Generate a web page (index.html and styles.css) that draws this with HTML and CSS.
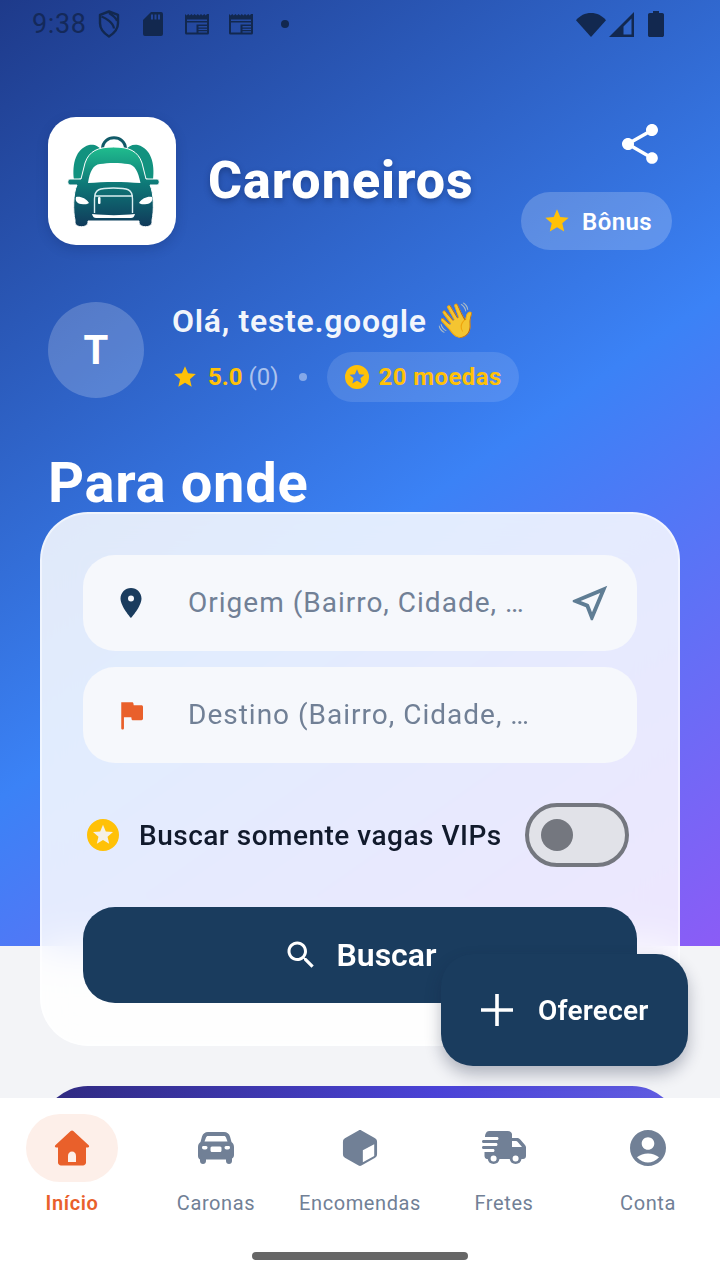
FILE: index.html
```html
<!DOCTYPE html>
<html lang="pt-BR">
<head>
<meta charset="utf-8">
<title>Caroneiros</title>
<link rel="stylesheet" href="styles.css">
</head>
<body>
<svg class="defs" width="0" height="0" aria-hidden="true">
  <defs>
    <linearGradient id="logoGrad" x1="0" y1="0" x2="0" y2="1">
      <stop offset="0" stop-color="#20bd8e"/>
      <stop offset="0.45" stop-color="#0e7a78"/>
      <stop offset="1" stop-color="#10395a"/>
    </linearGradient>
    <path id="star" d="M12 17.27L18.18 21l-1.64-7.03L22 9.24l-7.19-.61L12 2 9.19 8.63 2 9.24l5.46 4.73L5.82 21z"/>
    <path id="coin" fill-rule="evenodd" d="M12 2a10 10 0 1 0 0 20 10 10 0 0 0 0-20zm0 3.6l1.75 4.15 4.5.38-3.42 2.96 1.03 4.4L12 15.15 8.14 17.5l1.03-4.4-3.42-2.96 4.5-.38z"/>
    <path id="news" fill-rule="evenodd" d="M1 1l1.6 1.4L4.2 1l1.6 1.4L7.4 1 9 2.4 10.6 1l1.6 1.4L13.8 1l1.6 1.4L17 1l1.6 1.4L20.2 1l1.6 1.4L23 1l2 0v19a1.6 1.6 0 0 1-1.6 1.6H2.6A1.6 1.6 0 0 1 1 20zM3 6.5v13h9.5v-8H23V6.5zM3 8h20v1.6H3zm11.5 5V14.600H23V13zm0 2.700v1.400H23v-1.400zm0 2.600v1.300H23v-1.300z"/>
  </defs>
</svg>

<main class="screen">
  <div class="scroll">
    <section class="hero">
      <div class="status">
        <span class="time">9:38</span>
        <svg class="st st-shield" viewBox="0 0 22 28"><path fill="none" stroke="currentColor" stroke-width="2.400" stroke-linejoin="round" d="M11 1.500l9 3.300v8.500c0 5.700-3.800 10-9 13.200-5.200-3.200-9-7.500-9-13.200V4.800z"/><path fill="none" stroke="currentColor" stroke-width="2.200" d="M3.500 6.500c4 1.500 12 6 12.500 12M11 3c5 3 7 4.500 8 8"/></svg>
        <svg class="st st-sd" viewBox="0 0 20 24"><path fill="currentColor" fill-rule="evenodd" d="M8 0h10a2 2 0 0 1 2 2v20a2 2 0 0 1-2 2H2a2 2 0 0 1-2-2V8zM8 2.500v5h2v-5zm3.500 0v5h2v-5zm3.500 0v5h2v-5z"/></svg>
        <svg class="st st-news" viewBox="0 0 26 22"><use href="#news" fill="currentColor"/></svg>
        <svg class="st st-news2" viewBox="0 0 26 22"><use href="#news" fill="currentColor"/></svg>
        <span class="st-dot"></span>
        <div class="status-right">
          <svg class="st st-wifi" viewBox="0 0 30 25"><path fill="currentColor" d="M15 25L0 8.300C3.900 3.500 9.100 1 15 1s11.100 2.500 15 7.300z"/></svg>
          <svg class="st st-signal" viewBox="0 0 25 25"><path fill="currentColor" fill-rule="evenodd" d="M25 0v25H0zM22.500 6.500l-8 8V22.500h8z"/></svg>
          <svg class="st st-batt" viewBox="0 0 16 26"><path fill="currentColor" d="M5 0h6v2h3.200c1 0 1.800.8 1.800 1.800v20.400c0 1-.8 1.800-1.800 1.800H1.800C.8 26 0 25.200 0 24.200V3.800C0 2.800.8 2 1.800 2H5z"/></svg>
        </div>
      </div>

      <header class="brand">
        <div class="logo">
          <svg viewBox="0 0 128 128" width="128" height="128">
            <path d="M54.500 32c0-15 23-15 23 0" fill="none" stroke="#115a68" stroke-width="3"/>
            <path d="M26 63C24 46 28 32 41 28c5-1 10 1 12 5-9 3-15 11-18 28z" fill="#12927f"/>
            <path d="M105 63c2-17-2-31-15-35-5-1-10 1-12 5 9 3 15 11 18 28z" fill="#12927f"/>
            <path d="M65.500 30C50 30 41 34 37 46L33 62H22c-3 0-3 6 0 6h7C25 76 25 95 27 103v3c1 5 12 5 13 0v-2h51v2c1 5 12 5 13 0v-3c2-8 2-27-2-35h7c3 0 3-6 0-6H98L94 46C90 34 81 30 65.500 30z" fill="url(#logoGrad)" stroke="#fff" stroke-width="1"/>
            <path d="M40 66c2-12 5-18 12-19 8-1.500 20-1.500 28 0 7 1 10 7 12.500 19-16.500-1.500-36.500-1.500-52.500 0z" fill="#fff"/>
            <path d="M28 80c4-1 10 1 13 6-2 1.500-4 1.500-8 1-4-.5-6-3-5-7zM104 80c-4-1-10 1-13 6 2 1.500 4 1.500 8 1 4-.5 6-3 5-7z" fill="#fff"/>
            <path d="M46.500 96V82c0-10 5-11 19-11s19 1 19 11v14M46.500 79h38.500" fill="none" stroke="#d9eef0" stroke-width="1.400"/>
            <rect x="50" y="80" width="2.500" height="7" rx="1" fill="#fff"/>
            <path d="M44 97c14 1.500 30 1.500 43 0-1 3-2 4-4 4H48c-2 0-3-1-4-4z" fill="#fff"/>
          </svg>
        </div>
        <h1 class="brand-name">Caroneiros</h1>
        <div class="brand-actions">
          <svg class="share" viewBox="0 0 24 24"><path fill="#fff" d="M18 16.080c-.76 0-1.440.3-1.960.77L8.910 12.700c.05-.23.09-.46.09-.7s-.04-.47-.09-.7l7.050-4.110c.54.5 1.250.81 2.040.81 1.660 0 3-1.340 3-3s-1.340-3-3-3-3 1.340-3 3c0 .24.04.47.09.7L8.040 9.810C7.500 9.310 6.790 9 6 9c-1.660 0-3 1.340-3 3s1.340 3 3 3c.79 0 1.500-.31 2.040-.81l7.120 4.160c-.05.21-.08.43-.08.65 0 1.610 1.310 2.920 2.920 2.920 1.610 0 2.920-1.310 2.920-2.920s-1.310-2.920-2.920-2.920z"/></svg>
          <div class="bonus">
            <svg class="bonus-star" viewBox="0 0 24 24"><use href="#star" fill="#ffc107"/></svg>
            <span class="bonus-label">Bônus</span>
          </div>
        </div>
      </header>

      <div class="user">
        <div class="avatar">T</div>
        <div class="user-info">
          <div class="greeting">Olá, teste.google <span class="wave">👋</span></div>
          <div class="meta">
            <svg class="meta-star" viewBox="0 0 24 24"><use href="#star" fill="#ffc107"/></svg>
            <span class="score">5.0</span>
            <span class="count">(0)</span>
            <span class="meta-dot"></span>
            <div class="coins">
              <svg class="coin-icon" viewBox="2 2 20 20"><use href="#coin" fill="#ffc107"/></svg>
              <span>20 moedas</span>
            </div>
          </div>
        </div>
      </div>

      <h2 class="headline">Para onde</h2>

      <form class="card">
        <div class="field">
          <svg class="field-icon" viewBox="0 0 24 24"><path fill="#1a3c5e" d="M12 2C8.130 2 5 5.130 5 9c0 5.250 7 13 7 13s7-7.750 7-13c0-3.870-3.130-7-7-7zm0 9a2 2 0 1 1 0-4 2 2 0 0 1 0 4z"/></svg>
          <span class="placeholder">Origem (Bairro, Cidade, …</span>
          <svg class="near" viewBox="0 0 24 24"><path fill="#5f7d94" d="M17.270 6.730l-4.240 10.130-1.320-3.420-.32-.83-.82-.32-3.430-1.330 10.130-4.230M21 3L3 10.530v.98l6.840 2.650L12.480 21h.98L21 3z"/></svg>
        </div>
        <div class="field">
          <svg class="field-icon" viewBox="0 0 24 24"><path fill="#e9602b" d="M5.500 3.500h7.200c.5 0 .8.300.9.700l.2 1.300h5.200c.5 0 1 .4 1 1v8c0 .5-.5 1-1 1h-5.700c-.5 0-.8-.3-.9-.7l-.2-1.300H7.300v7.300c0 .5-.4.900-.9.900s-.9-.4-.9-.9z"/></svg>
          <span class="placeholder">Destino (Bairro, Cidade, …</span>
        </div>
        <div class="vip">
          <svg class="vip-icon" viewBox="2 2 20 20"><circle cx="12" cy="12" r="7" fill="#f5f0e6"/><use href="#coin" fill="#ffc107"/></svg>
          <span class="vip-label">Buscar somente vagas VIPs</span>
          <span class="switch"><span class="knob"></span></span>
        </div>
        <button type="button" class="search-btn">
          <svg class="search-icon" viewBox="0 0 24 24"><path fill="#fff" d="M15.500 14h-.79l-.28-.27C15.410 12.590 16 11.110 16 9.500 16 5.910 13.090 3 9.500 3S3 5.910 3 9.500 5.910 16 9.500 16c1.610 0 3.090-.59 4.230-1.570l.27.28v.79l5 4.990L20.490 19l-4.990-5zm-6 0C7.010 14 5 11.990 5 9.500S7.010 5 9.500 5 14 7.010 14 9.500 11.990 14 9.500 14z"/></svg>
          <span>Buscar</span>
        </button>
      </form>
    </section>
    <div class="promo"></div>
  </div>

  <button type="button" class="fab">
    <svg class="fab-icon" viewBox="0 0 24 24"><path fill="#fff" d="M20 12.900h-7.100V20h-1.800v-7.100H4v-1.800h7.100V4h1.800v7.100H20z"/></svg>
    <span>Oferecer</span>
  </button>

  <nav class="nav">
    <div class="tabs">
      <a class="tab tab-active">
        <span class="tab-pill">
          <svg class="tab-icon" viewBox="0 0 36 36"><path fill="currentColor" d="M16.700 1c.8-.7 1.900-.7 2.600 0l15.400 14.300c.9.800.3 2.200-.9 2.200H32v15c0 1.600-1.400 3-3 3H7c-1.600 0-3-1.400-3-3v-15H2.200c-1.200 0-1.800-1.400-.9-2.200z"/><path fill="#fdefe9" d="M14 32v-6c0-2.800 1.800-4.500 4-4.500s4 1.700 4 4.500v6z"/></svg>
        </span>
        <span class="tab-label">Início</span>
      </a>
      <a class="tab">
        <span class="tab-pill">
          <svg class="tab-icon" viewBox="0 0 36 32"><path fill="currentColor" fill-rule="evenodd" d="M10 0h16c3 0 5 1.500 6 4.500l1.500 5.500c1.500 1 2.500 2.800 2.500 5v8c0 2-1 3-2 3.500V29c0 1.700-1.300 3-3 3s-3-1.300-3-3v-1.500H8V29c0 1.700-1.300 3-3 3s-3-1.300-3-3v-1.500C1 27 0 26 0 24v-9c0-2.200 1-4 2.500-5L4 4.500C5 1.500 7 0 10 0zm0 4c-1 0-1.700.6-2 1.500L6.500 9.500h23L28 5.500C27.700 4.600 27 4 26 4zM4 15.500c0 1 .8 2 2 2h1.500c1.200 0 2-1 2-2s-.8-1.500-2-1.500H5.500c-1 0-1.500.5-1.500 1.500zm22.500 0c0 1 .8 2 2 2H30c1.200 0 2-1 2-2s-.5-1.500-1.500-1.500h-2c-1.200 0-2 .5-2 1.500zM14 14.500c-1 0-1.500.7-1.500 1.800v1.900c0 1 .5 1.800 1.500 1.800h8c1 0 1.500-.8 1.500-1.800v-1.900c0-1.100-.5-1.800-1.500-1.800z"/></svg>
        </span>
        <span class="tab-label">Caronas</span>
      </a>
      <a class="tab">
        <span class="tab-pill">
          <svg class="tab-icon" viewBox="0 0 36 38"><path fill="currentColor" fill-rule="evenodd" d="M16.500.5c1-.6 2-.6 3 0l14 8c1.600 1 2.500 2 2.500 4v13c0 2-.9 3-2.500 4l-14 8c-1 .6-2 .6-3 0l-14-8C.9 28.500 0 27.500 0 25.500v-13c0-2 .9-3 2.500-4zM33 15l-12 6.500V34l12-6.500z"/></svg>
        </span>
        <span class="tab-label">Encomendas</span>
      </a>
      <a class="tab">
        <span class="tab-pill">
          <svg class="tab-icon tab-truck" viewBox="0 0 44 34"><path fill="currentColor" fill-rule="evenodd" d="M7 0h19c2 0 4 1.500 4 3.500V7h5c1.500 0 2.500.5 3.500 1.700L43 14c.7.800 1 1.600 1 2.600V25c0 2-1.300 3-3 3h-1.500a6 6 0 0 1-11.800 0H17.500a6 6 0 0 1-11.800 0H5c-1.500 0-2.500-1.500-2.500-3v-4H11c1 0 1.500-.7 1.500-1.500S12 18 11 18H1.500C.5 18 0 17.300 0 16.500S.5 15 1.500 15H14c1 0 1.500-.7 1.500-1.500S15 12 14 12H1.500C.5 12 0 11.300 0 10.500S.5 9 1.500 9H15c1 0 1.500-.7 1.500-1.500S16 6 15 6H3C3 3 4.500 0 7 0zm23 10v6h10l-4.500-5.300c-.4-.5-.8-.7-1.500-.7zM11.600 24.500a3 3 0 1 0 0 6 3 3 0 0 0 0-6zm22 0a3 3 0 1 0 0 6 3 3 0 0 0 0-6z"/></svg>
        </span>
        <span class="tab-label">Fretes</span>
      </a>
      <a class="tab">
        <span class="tab-pill">
          <svg class="tab-icon" viewBox="2 2 20 20"><path fill="currentColor" d="M12 2C6.480 2 2 6.480 2 12s4.480 10 10 10 10-4.480 10-10S17.520 2 12 2zm0 4c1.930 0 3.500 1.570 3.500 3.500S13.930 13 12 13s-3.500-1.570-3.500-3.500S10.070 6 12 6zm0 14c-2.030 0-4.430-.82-6.140-2.880C7.550 15.800 9.680 15 12 15s4.450.8 6.140 2.120C16.430 19.180 14.030 20 12 20z"/></svg>
        </span>
        <span class="tab-label">Conta</span>
      </a>
    </div>
    <div class="home-bar"></div>
  </nav>
</main>
</body>
</html>
```

FILE: styles.css
```css
* { box-sizing: border-box; }
html, body { margin: 0; padding: 0; }
body { font-family: Roboto, "Noto Sans", sans-serif; }
.defs { position: absolute; }

.screen {
  position: relative;
  width: 720px;
  height: 1280px;
  overflow: hidden;
  display: flex;
  flex-direction: column;
  background: #f3f4f7;
}
.scroll { flex: 1; min-height: 0; overflow: hidden; }

.hero {
  height: 946px;
  padding: 0 40px;
  background: linear-gradient(145deg, #1e3a8a 0%, #3b82f6 55%, #8b5cf6 100%);
}

.status {
  display: flex;
  align-items: center;
  height: 48px;
  margin: 0 -40px;
  padding: 0 56px 0 32px;
  color: #12284f;
}
.time { font-size: 27px; letter-spacing: .6px; color: #14295a; width: 59px; }
.st { display: block; flex: none; }
.st-shield { width: 22px; height: 28px; margin-left: 7px; }
.st-sd { width: 20px; height: 24px; margin-left: 23px; }
.st-news { width: 26px; height: 22px; margin-left: 21px; }
.st-news2 { width: 26px; height: 22px; margin-left: 18px; }
.st-dot { width: 8px; height: 8px; border-radius: 50%; background: currentColor; margin-left: 27px; }
.status-right { display: flex; align-items: center; margin-left: auto; }
.st-wifi { width: 30px; height: 25px; }
.st-signal { width: 25px; height: 25px; margin-left: 3px; }
.st-batt { width: 16px; height: 26px; margin-left: 14px; }

.brand {
  display: flex;
  align-items: center;
  height: 128px;
  margin: 69px 8px 0;
}
.logo {
  width: 128px;
  height: 128px;
  flex: none;
  border-radius: 28px;
  background: #fff;
  box-shadow: 0 4px 12px rgba(15, 30, 80, .22);
}
.logo svg { display: block; }
.brand-name {
  margin: 0 0 0 32px;
  font-size: 52px;
  font-weight: 800;
  line-height: 60px;
  letter-spacing: 1px;
  color: #fff;
  text-shadow: 0 3px 6px rgba(10, 25, 70, .35);
}
.brand-actions {
  display: flex;
  flex-direction: column;
  align-items: flex-end;
  margin: 0 0 0 auto;
  align-self: flex-start;
}
.share { width: 48px; height: 48px; display: block; margin: 3px 8px 0 0; }
.bonus {
  display: flex;
  align-items: center;
  gap: 11px;
  height: 58px;
  margin-top: 24px;
  padding: 0 20px 0 22px;
  border-radius: 29px;
  background: rgba(255, 255, 255, .2);
  color: #fff;
  font-size: 24px;
  font-weight: 600;
  letter-spacing: .4px;
  white-space: nowrap;
}
.bonus-label { padding-top: 2px; }
.bonus-star { width: 28px; height: 28px; }

.user {
  display: flex;
  align-items: flex-start;
  gap: 28px;
  margin: 57px 8px 0;
  height: 100px;
}
.avatar {
  width: 96px;
  height: 96px;
  flex: none;
  display: flex;
  align-items: center;
  justify-content: center;
  border-radius: 50%;
  background: rgba(255, 255, 255, .2);
  color: #fff;
  font-size: 40px;
  font-weight: 700;
}
.user-info { display: flex; flex-direction: column; margin-top: -1px; }
.greeting {
  font-size: 32px;
  font-weight: 600;
  line-height: 38px;
  letter-spacing: .7px;
  color: rgba(255, 255, 255, .95);
  white-space: nowrap;
}
.wave { font-family: "Noto Color Emoji", sans-serif; font-size: 34px; letter-spacing: 0; }
.meta { display: flex; align-items: center; margin-top: 12px; height: 50px; }
.meta-star { width: 26px; height: 26px; margin-right: 10px; }
.score { font-size: 24px; font-weight: 700; color: #ffc107; }
.count { font-size: 24px; color: rgba(255, 255, 255, .6); margin-left: 6px; }
.meta-dot { width: 8px; height: 8px; border-radius: 50%; background: rgba(255, 255, 255, .4); margin: 0 20px; }
.coins {
  display: flex;
  align-items: center;
  gap: 10px;
  height: 50px;
  padding: 0 17px 0 18px;
  border-radius: 25px;
  background: rgba(255, 255, 255, .12);
  color: #ffc107;
  font-size: 24px;
  font-weight: 700;
  letter-spacing: .4px;
  white-space: nowrap;
}
.coin-icon { width: 24px; height: 24px; }

.headline {
  margin: 49px 8px 0;
  height: 61px;
  font-size: 56px;
  font-weight: 700;
  line-height: 64px;
  letter-spacing: .7px;
  color: #fff;
}

.card {
  display: flex;
  flex-direction: column;
  height: 534px;
  padding: 41px;
  border: 2px solid rgba(255, 255, 255, .5);
  border-radius: 48px;
  background: rgba(255, 255, 255, .85);
  backdrop-filter: blur(20px);
}
.field {
  display: flex;
  align-items: center;
  height: 96px;
  flex: none;
  margin-bottom: 16px;
  padding: 0 32px 0 24px;
  border-radius: 32px;
  background: #f6f8fc;
}
.field-icon { width: 48px; height: 36px; flex: none; }
.placeholder { margin-left: 33px; padding-bottom: 2px; font-size: 28px; letter-spacing: 1px; color: #718096; white-space: nowrap; }
.near { width: 46px; height: 46px; margin-left: auto; margin-right: -8px; }

.vip { display: flex; align-items: center; height: 64px; margin-top: 24px; padding-left: 4px; }
.vip-icon { width: 32px; height: 32px; flex: none; }
.vip-label { margin-left: 20px; font-size: 28px; font-weight: 500; letter-spacing: .5px; color: #111a2c; white-space: nowrap; }
.switch {
  display: flex;
  align-items: center;
  width: 104px;
  height: 64px;
  margin-left: auto;
  margin-right: 8px;
  padding-left: 12px;
  border: 4px solid #74777f;
  border-radius: 32px;
  background: #e1e2e8;
}
.knob { width: 32px; height: 32px; border-radius: 50%; background: #74777f; }

.search-btn {
  display: flex;
  align-items: center;
  justify-content: center;
  gap: 17px;
  height: 96px;
  margin-top: 40px;
  flex: none;
  border: 0;
  border-radius: 32px;
  background: #1a3c5e;
  color: #fff;
  font-family: inherit;
  font-size: 32px;
  font-weight: 600;
}
.search-icon { width: 36px; height: 36px; }

.promo {
  height: 120px;
  margin: 140px 40px 0;
  border-radius: 48px 48px 0 0;
  background: linear-gradient(100deg, #2f2a7f 0%, #4a42d6 60%, #6360e2 100%);
}

.fab {
  position: absolute;
  left: 441px;
  top: 954px;
  display: flex;
  align-items: center;
  gap: 17px;
  width: 247px;
  height: 112px;
  padding: 0 0 0 32px;
  border: 0;
  border-radius: 32px;
  background: #1a3c5e;
  color: #fff;
  font-family: inherit;
  font-size: 28px;
  font-weight: 600;
  letter-spacing: .25px;
  box-shadow: 0 8px 16px rgba(20, 30, 60, .3);
}
.fab-icon { width: 48px; height: 48px; }

.nav { flex: none; height: 182px; background: #fff; position: relative; display: flex; flex-direction: column; }
.tabs { display: grid; grid-template-columns: repeat(5, 1fr); padding-top: 16px; }
.tab { display: flex; flex-direction: column; align-items: center; color: #718096; }
.tab-active { color: #e9602b; }
.tab-pill { display: flex; align-items: center; justify-content: center; width: 92px; height: 68px; border-radius: 34px; }
.tab-active .tab-pill { background: #fdefe9; }
.tab-icon { width: 36px; height: 36px; display: block; }
.tab-truck { width: 44px; }
.tab-label { margin-top: 8px; font-size: 20px; font-weight: 450; line-height: 26px; letter-spacing: .6px; white-space: nowrap; }
.tab-active .tab-label { font-weight: 600; }
.home-bar { width: 216px; height: 8px; border-radius: 4px; background: #666; margin: 36px auto 0; }
```
